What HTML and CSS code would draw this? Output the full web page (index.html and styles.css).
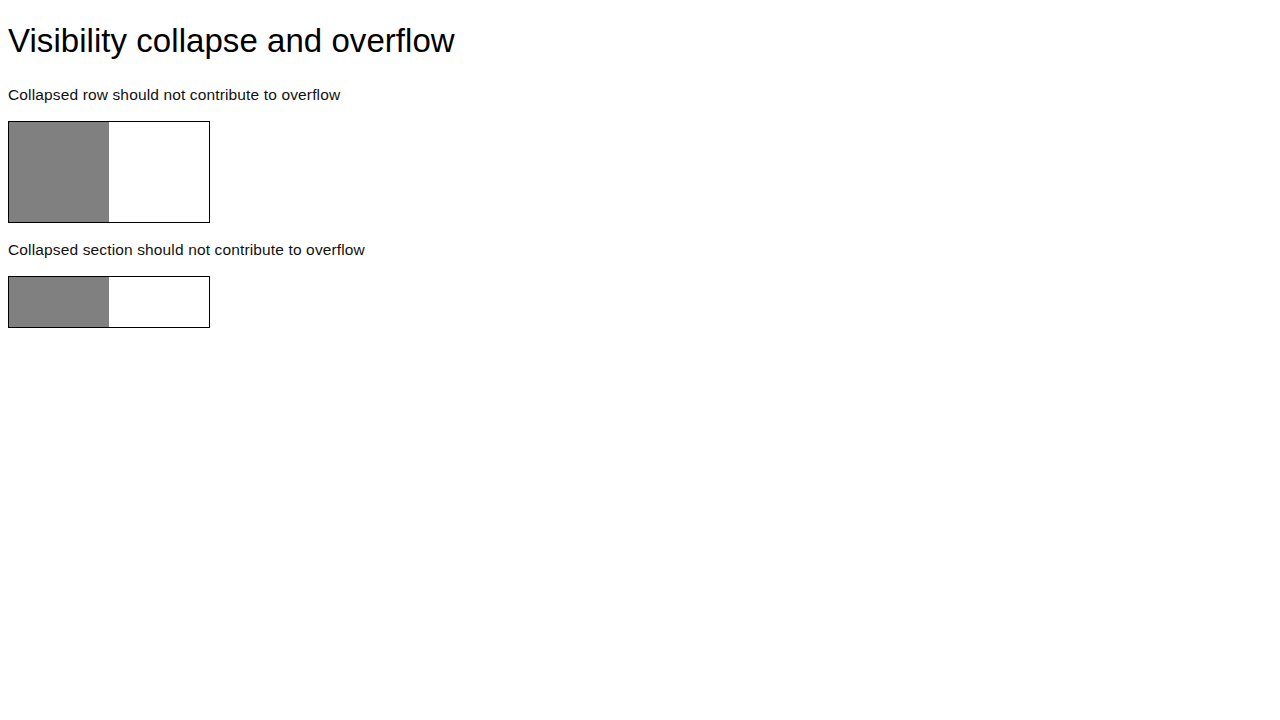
FILE: index.html
```html
<!DOCTYPE html>
<html>
<head>
<meta charset="utf-8">
<link rel="stylesheet" href="styles.css">
</head>
<body>
<h1 class="title">Visibility collapse and overflow</h1>
<p class="label">Collapsed row should not contribute to overflow</p>
<div class="box">
  <div class="cell tall"></div>
</div>
<p class="label">Collapsed section should not contribute to overflow</p>
<div class="box">
  <div class="cell short"></div>
</div>
</body>
</html>
```
FILE: styles.css
```css
body {
  margin: 8px;
  font-family: "Liberation Sans", Arial, sans-serif;
  color: #000;
  background: #fff;
}
.title {
  font-size: 33px;
  line-height: 41px;
  font-weight: normal;
  letter-spacing: 0.05px;
  margin: 12px 0 23px;
}
.label {
  font-size: 15.5px;
  line-height: 21px;
  letter-spacing: 0.14px;
  color: #111;
  margin: 16px 0;
}
.box {
  width: 200px;
  border: 1px solid #000;
}
.cell {
  width: 100px;
  background: #808080;
}
.tall { height: 100px; }
.short { height: 50px; }
```
